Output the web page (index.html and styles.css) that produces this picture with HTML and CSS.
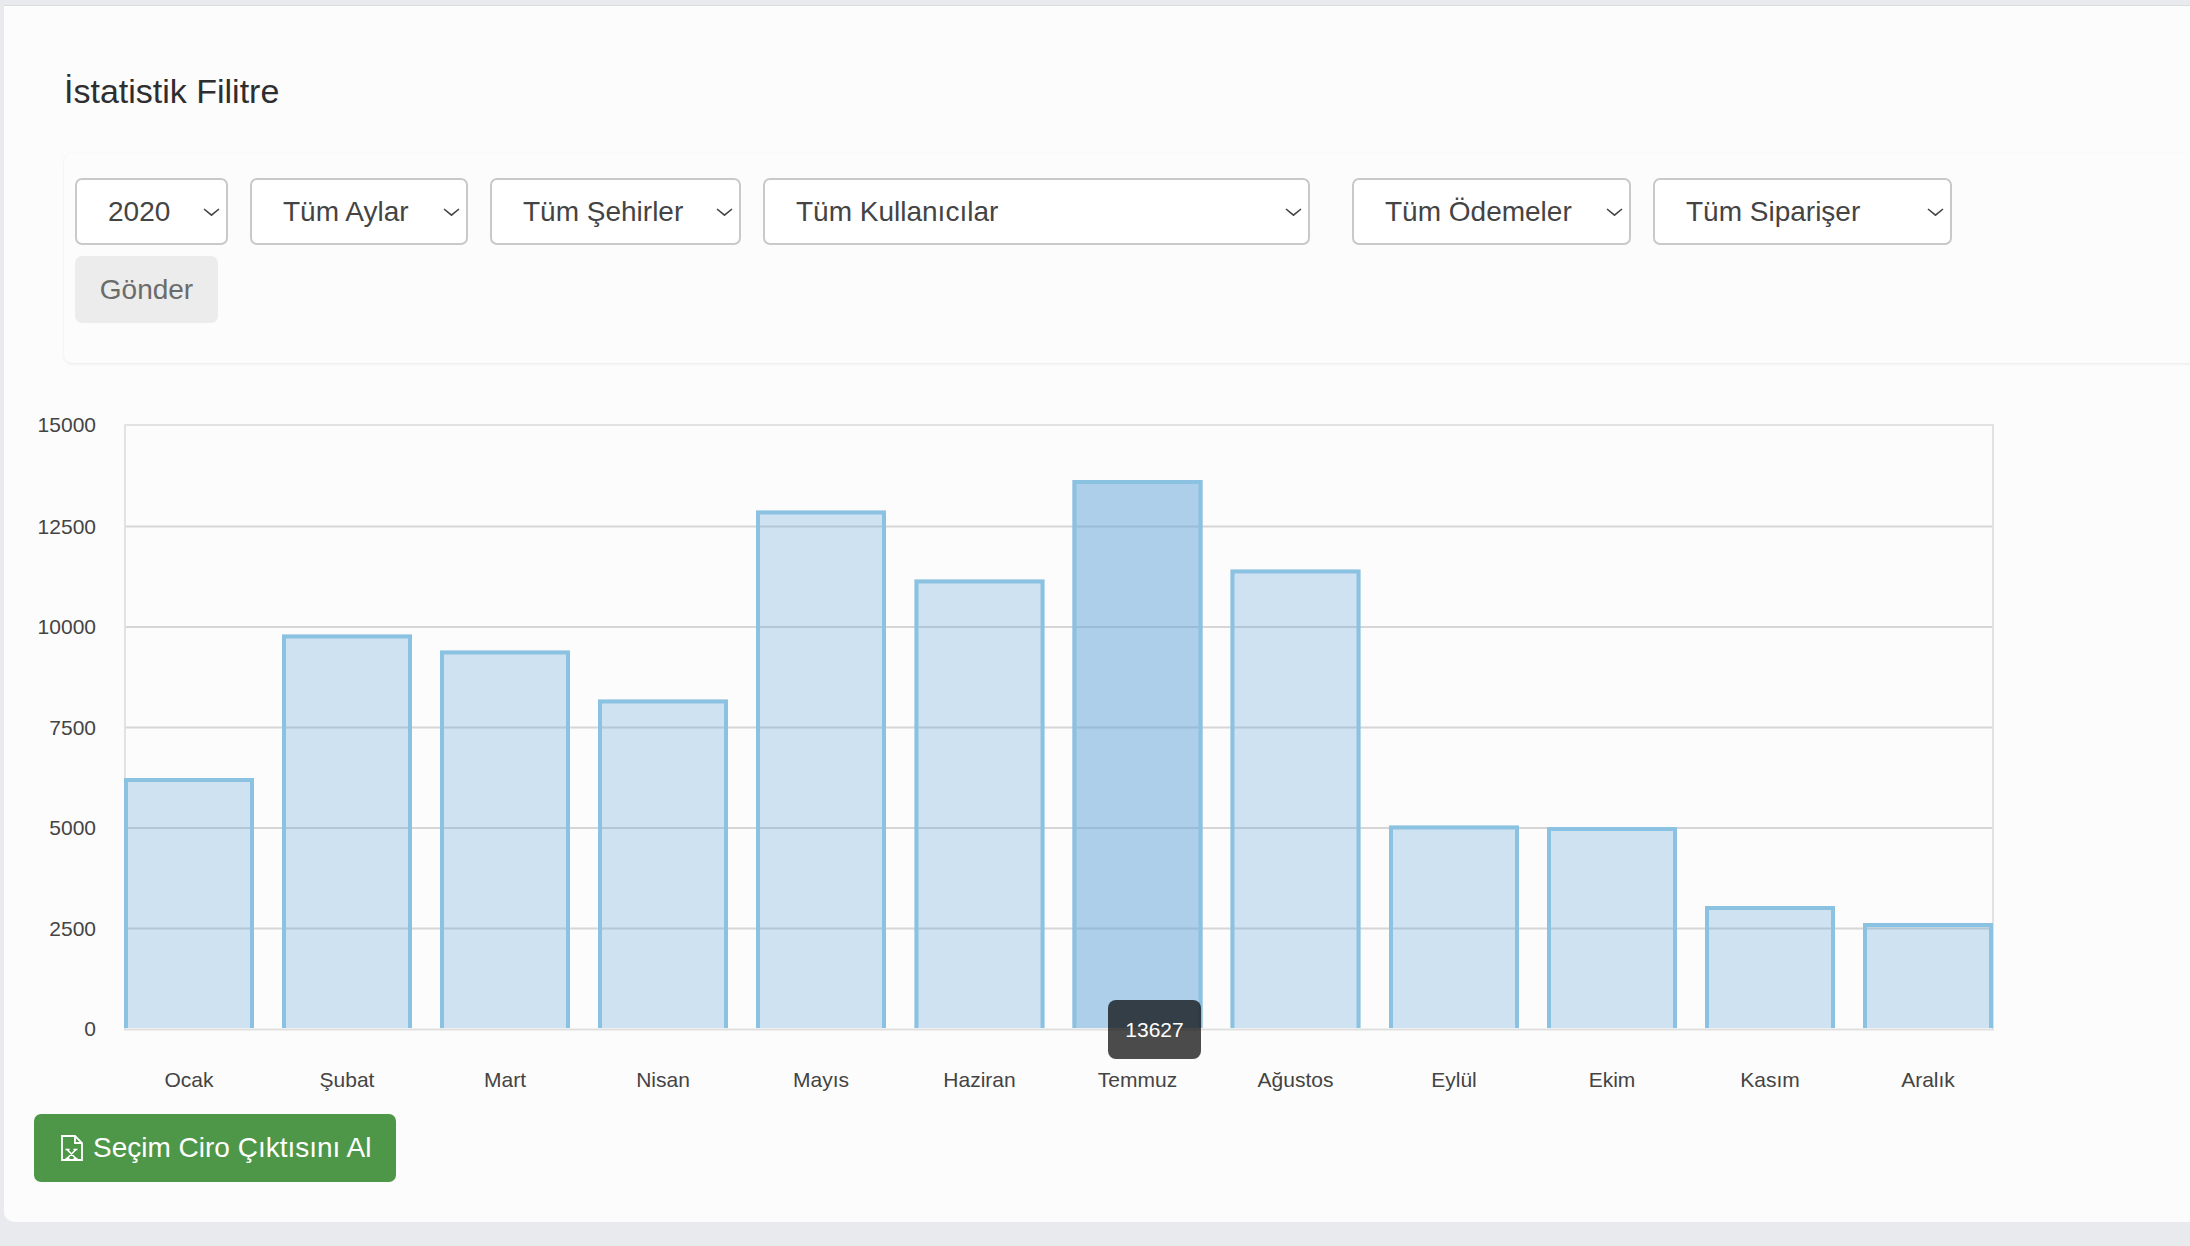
FILE: index.html
```html
<!DOCTYPE html>
<html lang="tr">
<head>
<meta charset="utf-8">
<title>İstatistik Filitre</title>
<link rel="stylesheet" href="styles.css">
</head>
<body>
<div class="page">
  <h1 class="title">İstatistik Filitre</h1>

  <div class="filter-card">
    <div class="filter-row">
      <div class="select w-year"><span>2020</span><svg class="chev" viewBox="0 0 17 8"><polyline points="1,1 8.5,7.2 16,1"/></svg></div>
      <div class="select w-month"><span>Tüm Aylar</span><svg class="chev" viewBox="0 0 17 8"><polyline points="1,1 8.5,7.2 16,1"/></svg></div>
      <div class="select w-city"><span>Tüm Şehirler</span><svg class="chev" viewBox="0 0 17 8"><polyline points="1,1 8.5,7.2 16,1"/></svg></div>
      <div class="select w-user"><span>Tüm Kullanıcılar</span><svg class="chev" viewBox="0 0 17 8"><polyline points="1,1 8.5,7.2 16,1"/></svg></div>
      <div class="select w-pay"><span>Tüm Ödemeler</span><svg class="chev" viewBox="0 0 17 8"><polyline points="1,1 8.5,7.2 16,1"/></svg></div>
      <div class="select w-order"><span>Tüm Siparişer</span><svg class="chev" viewBox="0 0 17 8"><polyline points="1,1 8.5,7.2 16,1"/></svg></div>
    </div>
    <button class="btn-send" type="button">Gönder</button>
  </div>

  <svg class="chart" width="2000" height="700" viewBox="4 400 2000 700">
    <g class="grid">
      <line x1="124" y1="526.5" x2="1994" y2="526.5"/>
      <line x1="124" y1="627" x2="1994" y2="627"/>
      <line x1="124" y1="727.5" x2="1994" y2="727.5"/>
      <line x1="124" y1="828" x2="1994" y2="828"/>
      <line x1="124" y1="928.5" x2="1994" y2="928.5"/>
    </g>
    <g class="frame">
      <line x1="124" y1="425" x2="1994" y2="425"/>
      <line x1="125" y1="424" x2="125" y2="1030"/>
      <line x1="1993" y1="424" x2="1993" y2="1030"/>
    </g>
    <g class="bars">
      <rect class="fill" x="124" y="778" width="130" height="250"/><path class="edge" d="M126 1028 V780 H252 V1028"/>
      <rect class="fill" x="282" y="634.5" width="130" height="393.5"/><path class="edge" d="M284 1028 V636.5 H410 V1028"/>
      <rect class="fill" x="440" y="650.5" width="130" height="377.5"/><path class="edge" d="M442 1028 V652.5 H568 V1028"/>
      <rect class="fill" x="598" y="699.5" width="130" height="328.5"/><path class="edge" d="M600 1028 V701.5 H726 V1028"/>
      <rect class="fill" x="756" y="510.5" width="130" height="517.5"/><path class="edge" d="M758 1028 V512.5 H884 V1028"/>
      <rect class="fill" x="914.5" y="579.5" width="130" height="448.5"/><path class="edge" d="M916.5 1028 V581.5 H1042.5 V1028"/>
      <rect class="fill active" x="1072.5" y="480" width="130" height="548"/><path class="edge" d="M1074.5 1028 V482 H1200.5 V1028"/>
      <rect class="fill" x="1230.5" y="569.5" width="130" height="458.5"/><path class="edge" d="M1232.5 1028 V571.5 H1358.5 V1028"/>
      <rect class="fill" x="1389" y="825.5" width="130" height="202.5"/><path class="edge" d="M1391 1028 V827.5 H1517 V1028"/>
      <rect class="fill" x="1547" y="827" width="130" height="201"/><path class="edge" d="M1549 1028 V829 H1675 V1028"/>
      <rect class="fill" x="1705" y="906" width="130" height="122"/><path class="edge" d="M1707 1028 V908 H1833 V1028"/>
      <rect class="fill" x="1863" y="923" width="130" height="105"/><path class="edge" d="M1865 1028 V925 H1991 V1028"/>
    </g>
    <line class="axis" x1="124" y1="1029.5" x2="1994" y2="1029.5"/>
    <g class="ylabels">
      <text x="96" y="425" dy="0.35em">15000</text>
      <text x="96" y="526.5" dy="0.35em">12500</text>
      <text x="96" y="627" dy="0.35em">10000</text>
      <text x="96" y="727.5" dy="0.35em">7500</text>
      <text x="96" y="828" dy="0.35em">5000</text>
      <text x="96" y="928.5" dy="0.35em">2500</text>
      <text x="96" y="1029" dy="0.35em">0</text>
    </g>
    <g class="xlabels">
      <text x="189" y="1080" dy="0.35em">Ocak</text>
      <text x="347" y="1080" dy="0.35em">Şubat</text>
      <text x="505" y="1080" dy="0.35em">Mart</text>
      <text x="663" y="1080" dy="0.35em">Nisan</text>
      <text x="821" y="1080" dy="0.35em">Mayıs</text>
      <text x="979.5" y="1080" dy="0.35em">Haziran</text>
      <text x="1137.5" y="1080" dy="0.35em">Temmuz</text>
      <text x="1295.5" y="1080" dy="0.35em">Ağustos</text>
      <text x="1454" y="1080" dy="0.35em">Eylül</text>
      <text x="1612" y="1080" dy="0.35em">Ekim</text>
      <text x="1770" y="1080" dy="0.35em">Kasım</text>
      <text x="1928" y="1080" dy="0.35em">Aralık</text>
    </g>
    <g class="tooltip">
      <rect x="1108" y="1000" width="93" height="59" rx="8" ry="8"/>
      <text x="1154.5" y="1029.5" dy="0.35em">13627</text>
    </g>
  </svg>

  <button class="btn-export" type="button">
    <svg class="xls" width="22" height="26" viewBox="0 0 22 26">
      <path class="doc" d="M1 1 H14 L21 8 V25 H1 Z"/>
      <path class="doc" d="M14 1 V8 H21"/>
      <path class="xmark" d="M6 14.5 L15 23.5 M15 14.5 L6 23.5 M4.5 14.5 H8.5 M12.5 14.5 H16.5 M4.5 23.5 H8.5 M12.5 23.5 H16.5"/>
    </svg>
    <span>Seçim Ciro Çıktısını Al</span>
  </button>
</div>
</body>
</html>
```

FILE: styles.css
```css
html, body {
  margin: 0;
  padding: 0;
}

body {
  background: #e9eaed;
  font-family: "Liberation Sans", Arial, sans-serif;
  color: #444;
  overflow: hidden;
}

.page {
  margin: 5px 0 0 4px;
  border-top: 1px solid #dcdcdc;
  background: #fcfcfc;
  border-bottom-left-radius: 10px;
  padding-bottom: 40px;
}

.title {
  margin: 68px 0 0 60px;
  font-size: 34px;
  line-height: 34px;
  font-weight: normal;
  color: #2e2e30;
}

.filter-card {
  margin: 45px -30px 0 60px;
  padding: 25px 0 40px 11px;
  background: #fcfcfc;
  border-radius: 8px;
  box-shadow: 0 1px 3px rgba(0, 0, 0, 0.08);
}

.filter-row {
  display: flex;
  gap: 22px;
}

.select {
  box-sizing: border-box;
  height: 67px;
  display: flex;
  align-items: center;
  justify-content: space-between;
  padding: 0 6px 0 31px;
  background: #fff;
  border: 2px solid #c9c9c9;
  border-radius: 7px;
  font-size: 28px;
  color: #444;
}

.w-year { width: 153px; }
.w-month { width: 218px; }
.w-city { width: 251px; }
.w-user { width: 547px; }
.w-pay { width: 279px; margin-left: 20px; }
.w-order { width: 299px; }

.chev {
  width: 17px;
  height: 8px;
  flex: none;
}

.chev polyline {
  fill: none;
  stroke: #444;
  stroke-width: 1.6;
}

.btn-send {
  display: block;
  margin-top: 11px;
  width: 143px;
  height: 67px;
  padding: 0;
  border: none;
  border-radius: 7px;
  background: #ececec;
  color: #6b6b6b;
  font-family: "Liberation Sans", Arial, sans-serif;
  font-size: 28px;
  text-align: center;
}

.chart {
  display: block;
  margin-top: 37px;
  font-family: "Liberation Sans", Arial, sans-serif;
}

.grid line {
  stroke: #d6d6d6;
  stroke-width: 2;
}

.frame line {
  stroke: #e2e2e2;
  stroke-width: 2;
}

.axis {
  stroke: #e0e0e0;
  stroke-width: 2;
}

.bars .fill {
  fill: rgba(100, 165, 215, 0.3);
}

.bars .fill.active {
  fill: rgba(100, 165, 215, 0.52);
}

.bars .edge {
  fill: none;
  stroke: #8bc1e1;
  stroke-width: 4;
}

.ylabels text {
  font-size: 21px;
  fill: #444;
  text-anchor: end;
}

.xlabels text {
  font-size: 21px;
  fill: #444;
  text-anchor: middle;
}

.tooltip rect {
  fill: rgba(0, 0, 0, 0.7);
}

.tooltip text {
  font-size: 21px;
  fill: #fff;
  text-anchor: middle;
}

.btn-export {
  display: inline-flex;
  align-items: center;
  gap: 10px;
  margin: 14px 0 0 30px;
  height: 68px;
  padding: 0 24px 0 27px;
  border: none;
  border-radius: 7px;
  background: #4f9748;
  color: #fff;
  font-family: "Liberation Sans", Arial, sans-serif;
  font-size: 28px;
}

.xls {
  flex: none;
}

.xls .doc {
  fill: none;
  stroke: #fff;
  stroke-width: 1.8;
  stroke-linejoin: miter;
}

.xls .xmark {
  fill: none;
  stroke: #fff;
  stroke-width: 1.6;
}
```
